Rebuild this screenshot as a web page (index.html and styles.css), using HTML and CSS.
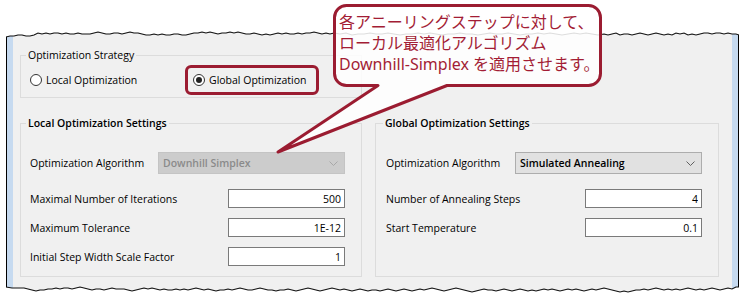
FILE: index.html
```html
<!DOCTYPE html>
<html lang="ja">
<head>
    <meta charset="UTF-8">
    <title>Optimization Settings</title>
    <link rel="stylesheet" href="styles.css">
</head>
<body>
    <div class="page">
        <div class="shot">
            <fieldset class="group strategy">
                <legend>Optimization Strategy</legend>
                <div class="radios">
                    <label class="radio local"><span class="dot"></span>Local Optimization</label>
                    <label class="radio marked"><span class="dot checked"></span>Global Optimization</label>
                </div>
            </fieldset>

            <div class="columns">
                <fieldset class="group settings">
                    <legend>Local Optimization Settings</legend>
                    <div class="row algo">
                        <span>Optimization Algorithm</span>
                        <div class="combo disabled">
                            <span>Downhill Simplex</span>
                            <svg width="9" height="5" viewBox="0 0 9 5"><polyline points="0.5,0.5 4.5,4.5 8.5,0.5"/></svg>
                        </div>
                    </div>
                    <div class="row"><span>Maximal Number of Iterations</span><input class="num" type="text" value="500"></div>
                    <div class="row"><span>Maximum Tolerance</span><input class="num" type="text" value="1E-12"></div>
                    <div class="row"><span>Initial Step Width Scale Factor</span><input class="num" type="text" value="1"></div>
                </fieldset>

                <fieldset class="group settings right">
                    <legend>Global Optimization Settings</legend>
                    <div class="row algo">
                        <span>Optimization Algorithm</span>
                        <div class="combo">
                            <span>Simulated Annealing</span>
                            <svg width="9" height="5" viewBox="0 0 9 5"><polyline points="0.5,0.5 4.5,4.5 8.5,0.5"/></svg>
                        </div>
                    </div>
                    <div class="row"><span>Number of Annealing Steps</span><input class="num" type="text" value="4"></div>
                    <div class="row"><span>Start Temperature</span><input class="num" type="text" value="0.1"></div>
                </fieldset>
            </div>

            <!-- torn edges of the screenshot -->
            <svg class="torn" viewBox="6 30 733 266" preserveAspectRatio="none">
                <path d="M0 0 V37 L6 37 L10 36 L14 36 L18 35 L22 35 L26 36 L30 36 L34 35 L38 33 L42 34 L46 33 L50 34 L54 33 L58 33 L62 34 L66 33 L70 34 L74 34 L78 33 L82 34 L86 34 L90 34 L94 33 L98 32 L102 33 L106 34 L110 34 L114 33 L118 33 L122 34 L126 33 L130 32 L134 33 L138 33 L142 34 L146 35 L150 35 L154 34 L158 35 L162 34 L166 35 L170 35 L174 34 L178 34 L182 35 L186 35 L190 34 L194 33 L198 33 L202 32 L206 33 L210 32 L214 33 L218 34 L222 33 L226 33 L230 32 L234 33 L238 32 L242 33 L246 34 L250 34 L254 33 L258 34 L262 35 L266 34 L270 35 L274 34 L278 33 L282 34 L286 33 L290 34 L294 34 L298 33 L302 34 L306 33 L310 33 L314 32 L318 33 L322 34 L326 33 L330 34 L334 33 L340 34 L346 33 L352 35 L358 34 L364 34 L370 33 L376 34 L382 34 L388 33 L394 34 L400 35 L406 34 L412 34 L418 33 L424 34 L430 33 L436 34 L442 35 L448 34 L454 34 L460 33 L466 34 L472 34 L478 35 L484 34 L490 33 L496 34 L502 34 L508 33 L514 34 L520 35 L526 34 L532 34 L538 33 L544 34 L550 33 L556 34 L562 35 L568 34 L574 33 L580 34 L586 33 L592 34 L598 35 L604 34 L608 35 L612 34 L616 33 L620 35 L624 34 L628 34 L632 35 L636 34 L640 33 L644 34 L648 35 L652 34 L656 33 L660 34 L664 35 L668 34 L672 35 L676 33 L680 34 L684 33 L688 35 L692 34 L696 35 L700 34 L704 33 L708 33 L712 34 L716 33 L720 33 L724 34 L728 33 L732 34 L736 34 L739 35 H745 V0 Z"/>
                <path d="M0 300 V287 L6 287 L12 288 L18 288 L24 288 L28 289 L32 290 L36 291 L40 290 L44 290 L48 289 L52 289 L56 288 L60 289 L64 288 L68 288 L72 289 L76 288 L80 287 L84 288 L88 289 L92 290 L96 289 L100 289 L104 290 L108 289 L112 288 L116 289 L120 289 L124 289 L128 290 L132 291 L136 290 L140 289 L144 288 L148 289 L152 288 L156 289 L160 290 L164 289 L168 290 L172 290 L176 289 L180 290 L184 289 L188 290 L192 289 L196 288 L200 289 L204 290 L208 289 L212 290 L216 291 L220 290 L224 290 L228 289 L232 290 L236 289 L240 288 L244 289 L248 290 L252 290 L256 289 L260 288 L264 289 L268 290 L272 290 L276 291 L280 290 L284 290 L288 289 L292 290 L296 291 L300 290 L304 289 L308 288 L312 289 L316 290 L320 291 L324 290 L328 289 L332 288 L336 289 L340 290 L344 289 L348 290 L352 291 L356 290 L360 289 L364 290 L368 291 L372 290 L376 290 L380 291 L384 290 L388 289 L392 290 L396 291 L400 290 L404 289 L408 290 L412 291 L416 290 L420 289 L424 290 L428 289 L432 288 L436 289 L440 290 L444 291 L448 290 L452 289 L456 288 L460 289 L464 290 L468 291 L472 292 L476 291 L480 290 L484 289 L488 290 L492 290 L496 291 L500 290 L504 289 L508 290 L512 291 L516 290 L520 289 L524 290 L528 291 L532 290 L536 291 L540 290 L544 289 L548 290 L552 289 L556 290 L560 291 L564 290 L568 289 L572 290 L576 289 L580 290 L584 291 L588 290 L592 289 L596 290 L600 289 L604 288 L608 289 L612 290 L616 291 L620 292 L624 291 L628 292 L632 291 L636 290 L640 290 L644 289 L648 290 L652 289 L656 288 L660 289 L664 290 L668 289 L672 290 L676 289 L680 290 L684 289 L688 288 L692 289 L696 290 L700 289 L704 290 L708 289 L712 288 L716 289 L720 290 L724 289 L728 288 L732 289 L736 287 L739 287 H745 V300 Z"/>
            </svg>
        </div>

        <div class="callout">
            <svg class="bubble" width="335" height="160" viewBox="270 0 335 160">
                <path d="M346.5 5.5 H588.5 A12 12 0 0 1 600.5 17.5 V73.5 A12 12 0 0 1 588.5 85.5 H447 L278 152 L378 85.5 H346.5 A12 12 0 0 1 334.5 73.5 V17.5 A12 12 0 0 1 346.5 5.5 Z"/>
            </svg>
            <div class="callout-text">各アニーリングステップに対して、<br>ローカル最適化アルゴリズム<br>Downhill-Simplex を適用させます。</div>
        </div>
    </div>
</body>
</html>
```

FILE: styles.css
```css
body {
    margin: 0;
    background-color: #ffffff;
    font-family: "Open Sans", "Noto Sans", sans-serif;
    font-size: 10.5px;
    line-height: 16px;
    color: #000;
}
.page {
    position: relative;
    width: 745px;
    height: 298px;
    overflow: hidden;
}
.shot {
    position: relative;
    box-sizing: border-box;
    width: 733px;
    height: 266px;
    margin: 30px 0 0 6px;
    padding: 17px 19px 0 13px;
    border-left: 1px solid #000;
    border-right: 1px solid #000;
    background-color: #f0f0f0;
    box-shadow: inset 6px 0 0 #c6daf0, inset -6px 0 0 #c6daf0;
}
.torn {
    position: absolute;
    left: -1px;
    top: 0;
    width: 733px;
    height: 266px;
}
.torn path {
    fill: #ffffff;
    stroke: #111;
    stroke-width: 1.1;
}
.group {
    margin: 0;
    border: 1px solid #dcdcdc;
    min-width: 0;
}
.group legend {
    padding: 0 2px;
    margin-left: -4px;
}
.strategy {
    width: 342px;
    box-sizing: border-box;
    padding: 2px 0 2px 9px;
}
.radios {
    display: flex;
    align-items: center;
    height: 30px;
}
.radio {
    display: flex;
    align-items: center;
    gap: 4px;
}
.radio.local {
    width: 155px;
}
.radio.marked {
    box-sizing: border-box;
    height: 30px;
    padding: 0 9px 0 5px;
    border: 3px solid #9b1c31;
    border-radius: 6px;
}
.dot {
    box-sizing: border-box;
    width: 12px;
    height: 12px;
    border: 1px solid #333;
    border-radius: 50%;
    background-color: #fff;
    display: flex;
    align-items: center;
    justify-content: center;
}
.dot.checked::after {
    content: "";
    width: 6px;
    height: 6px;
    border-radius: 50%;
    background-color: #222;
}
.columns {
    display: grid;
    grid-template-columns: 342px 344px;
    column-gap: 13px;
    margin-top: 17px;
}
.settings {
    box-sizing: border-box;
    padding: 21px 16px 10px 9px;
}
.settings legend {
    font-weight: 600;
}
.settings.right {
    padding-left: 10px;
}
.settings.right legend {
    margin-left: -3px;
}
.row {
    display: flex;
    justify-content: space-between;
    align-items: center;
}
.row + .row {
    margin-top: 10px;
}
.row.algo {
    margin-bottom: 15px;
}
.combo {
    box-sizing: border-box;
    width: 187px;
    height: 22px;
    padding: 0 6px 0 4px;
    border: 1px solid #adadad;
    background-color: #e1e1e1;
    display: flex;
    justify-content: space-between;
    align-items: center;
    font-weight: 600;
}
.combo polyline {
    fill: none;
    stroke: #606060;
    stroke-width: 1;
}
.combo.disabled {
    background-color: #cccccc;
    border-color: #c4c4c4;
    color: #8a8a8a;
}
.combo.disabled polyline {
    stroke: #a8a8a8;
}
.num {
    box-sizing: border-box;
    width: 117px;
    height: 19px;
    margin: 0;
    padding: 0 3px;
    border: 1px solid #7a7a7a;
    background-color: #fff;
    font-family: inherit;
    font-size: inherit;
    text-align: right;
    color: #000;
}
.callout {
    position: absolute;
    left: 270px;
    top: 0;
    width: 335px;
    height: 160px;
}
.bubble {
    display: block;
}
.bubble path {
    fill: rgba(255, 255, 255, 0.86);
    stroke: #9b1c31;
    stroke-width: 3;
    stroke-linejoin: round;
}
.callout-text {
    position: absolute;
    left: 69px;
    top: 12px;
    font-family: "Noto Sans", "Noto Sans CJK JP", sans-serif;
    font-size: 16px;
    line-height: 21px;
    color: #a31d35;
    white-space: nowrap;
}
```
